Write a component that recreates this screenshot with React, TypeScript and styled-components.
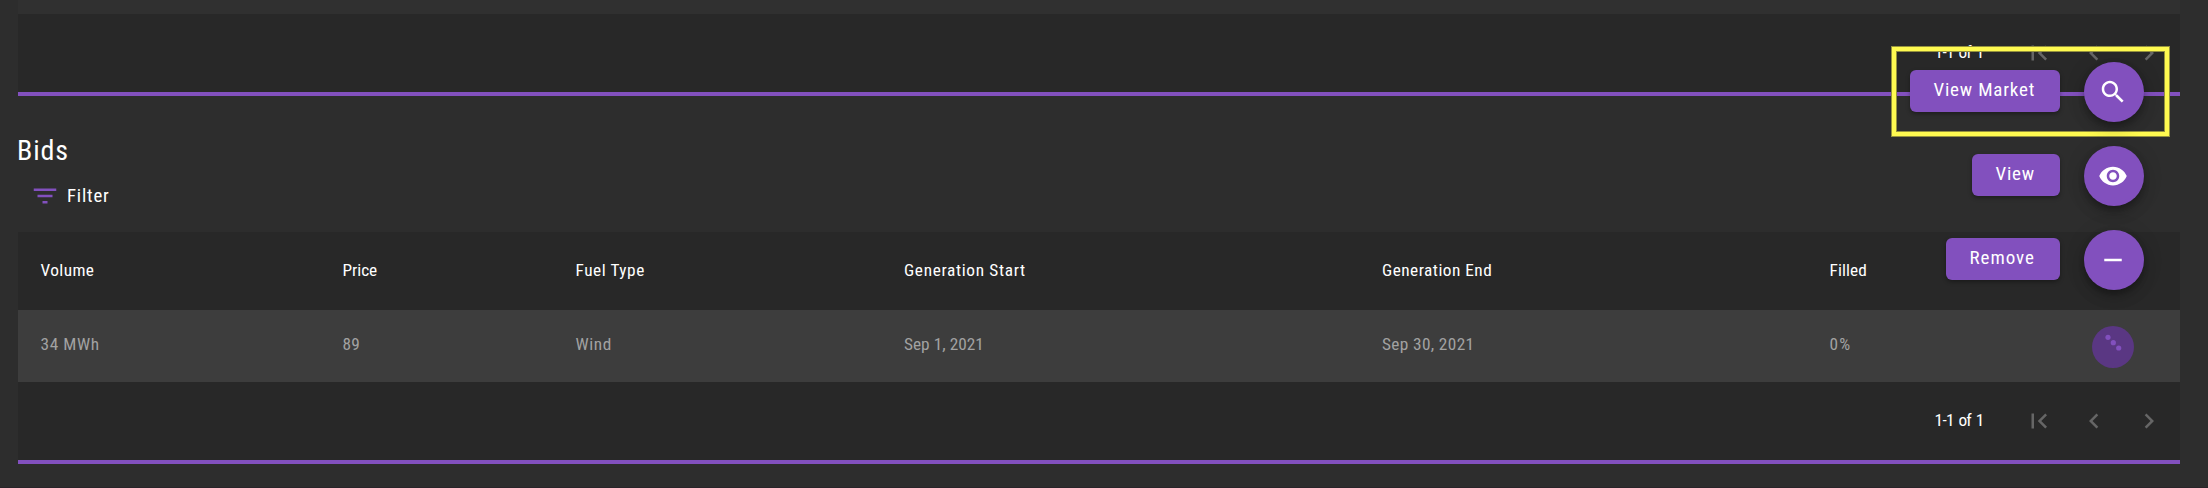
import React from 'react';
import styled, { createGlobalStyle } from 'styled-components';

const purple = '#8250be';

const GlobalStyle = createGlobalStyle`
  *, *::before, *::after { box-sizing: border-box; }
  body {
    margin: 0;
    background: #2d2d2d;
    color: #fff;
    font-family: Roboto, 'Liberation Sans', sans-serif;
    font-stretch: 75%;
  }
`;

const Page = styled.main`
  position: relative;
  height: 488px;
  padding: 0 28px 0 18px;
  overflow: hidden;
  border-bottom: 1px solid #292429;
`;

const RowEdge = styled.div`
  height: 14px;
  background: #303030;
`;

const TableFooter = styled.footer`
  display: flex;
  align-items: center;
  justify-content: flex-end;
  height: 82px;
  padding-right: 3px;
  background: #282828;
  border-bottom: 4px solid ${purple};
`;

const Label = styled.span<{ $track?: number }>`
  display: block;
  white-space: nowrap;
  letter-spacing: ${(p) => p.$track ?? 0}px;
`;

const PageRange = styled(Label)`
  flex: none;
  width: 76.5px;
  margin-top: -2px;
  font-size: 17.3px;
  line-height: 20px;
  word-spacing: 1.5px;
`;

const PagerButton = styled.button`
  display: flex;
  flex: none;
  justify-content: center;
  width: 55.3px;
  padding: 0;
  border: 0;
  background: none;
  color: #666;
`;

const Icon = styled.svg`
  display: block;
  width: 30px;
  height: 30px;
  fill: currentColor;
`;

const Title = styled.h2`
  margin: 0 0 0 -1px;
  padding-top: 38px;
  font-size: 28px;
  line-height: 34px;
  font-weight: 400;
`;

const FilterButton = styled.button`
  display: flex;
  align-items: center;
  gap: 7px;
  height: 64px;
  padding: 0 0 8px 12px;
  border: 0;
  background: none;
  color: #fff;
  font: inherit;
  font-stretch: 75%;
  font-size: 18.8px;
  line-height: 22px;

  svg { color: ${purple}; }
`;

const Row = styled.div<{ $head?: boolean }>`
  display: grid;
  grid-template-columns: 302px 233px 328.5px 478px 447.5px 1fr;
  align-items: center;
  height: ${(p) => (p.$head ? 78 : 72)}px;
  padding-left: 22.5px;
  padding-bottom: ${(p) => (p.$head ? 2 : 4)}px;
  background: ${(p) => (p.$head ? '#282828' : '#3d3d3d')};
  color: ${(p) => (p.$head ? '#fff' : '#a2a2a2')};
  font-size: 17.3px;
  line-height: 20px;
`;

const LastCell = styled.div`
  display: flex;
  align-items: center;
  justify-content: space-between;
  padding-right: 46px;
`;

const MoreButton = styled.button`
  width: 42px;
  height: 42px;
  margin-top: 6px;
  padding: 0;
  border: 0;
  border-radius: 50%;
  background: #5a3783;
  color: ${purple};

  svg { width: 42px; height: 42px; }
`;

const SpeedDial = styled.div`
  position: absolute;
  top: 62px;
  right: 64px;
  display: flex;
  flex-direction: column;
  gap: 24px;
`;

const Action = styled.div`
  display: flex;
  align-items: center;
  justify-content: flex-end;
  gap: 24px;
`;

const ActionLabel = styled.div<{ $width: number }>`
  width: ${(p) => p.$width}px;
  height: 42px;
  margin-bottom: 2px;
  padding: 8px 0 0 23.5px;
  border-radius: 6px;
  background: ${purple};
  box-shadow: 0 2px 4px rgba(0, 0, 0, 0.35);
  font-size: 19px;
  line-height: 23px;
`;

const Fab = styled.button`
  display: flex;
  align-items: center;
  justify-content: center;
  width: 60px;
  height: 60px;
  padding: 0 2px 0 0;
  border: 0;
  border-radius: 50%;
  background: ${purple};
  color: #fff;
  box-shadow: 0 4px 7px -1px rgba(0, 0, 0, 0.3), 0 8px 14px rgba(0, 0, 0, 0.13),
    0 1px 22px rgba(0, 0, 0, 0.1);
`;

const Highlight = styled.div`
  position: absolute;
  top: 46px;
  right: 38px;
  width: 279px;
  height: 91px;
  border: 1px solid #95923e;
  box-shadow: inset 0 0 0 4px #fffa50, inset 0 0 0 5px #95923e;
`;

const ICONS = {
  filter: 'M10 18h4v-2h-4v2zM3 6v2h18V6H3zm3 7h12v-2H6v2z',
  first: 'M18.41 16.59L13.82 12l4.59-4.59L17 6l-6 6 6 6zM6 6h2v12H6z',
  prev: 'M15.41 7.41L14 6l-6 6 6 6 1.41-1.41L10.83 12z',
  next: 'M10 6L8.59 7.41 13.17 12l-4.58 4.59L10 18l6-6z',
  search:
    'M15.5 14h-.79l-.28-.27C15.41 12.59 16 11.11 16 9.5 16 5.91 13.09 3 9.5 3S3 5.91 3 9.5 5.91 16 9.5 16c1.61 0 3.09-.59 4.23-1.57l.27.28v.79l5 4.99L20.49 19l-4.99-5zm-6 0C7.01 14 5 11.99 5 9.5S7.01 5 9.5 5 14 7.01 14 9.5 11.99 14 9.5 14z',
  eye: 'M12 4.5C7 4.5 2.73 7.61 1 12c1.73 4.39 6 7.5 11 7.5s9.27-3.11 11-7.5c-1.73-4.39-6-7.5-11-7.5zM12 17c-2.76 0-5-2.24-5-5s2.24-5 5-5 5 2.24 5 5-2.24 5-5 5zm0-8c-1.66 0-3 1.34-3 3s1.34 3 3 3 3-1.34 3-3-1.34-3-3-3z',
  minus: 'M19 13H5v-2h14v2z',
};

const Glyph = ({ name }: { name: keyof typeof ICONS }) => (
  <Icon viewBox="0 0 24 24" aria-hidden="true">
    <path d={ICONS[name]} />
  </Icon>
);

const Pagination = () => (
  <TableFooter>
    <PageRange $track={-0.75}>1-1 of 1</PageRange>
    <PagerButton aria-label="First page"><Glyph name="first" /></PagerButton>
    <PagerButton aria-label="Previous page"><Glyph name="prev" /></PagerButton>
    <PagerButton aria-label="Next page"><Glyph name="next" /></PagerButton>
  </TableFooter>
);

const headings: [string, number][] = [
  ['Volume', 0.4],
  ['Price', -0.05],
  ['Fuel Type', 0.55],
  ['Generation Start', 0.66],
  ['Generation End', 0.47],
  ['Filled', 0.08],
];

const bid: [string, number][] = [
  ['34 MWh', 0.6],
  ['89', 0.3],
  ['Wind', 0.55],
  ['Sep 1, 2021', 0.03],
  ['Sep 30, 2021', 0.36],
];

const actions: { text: string; width: number; track: number; icon: keyof typeof ICONS }[] = [
  { text: 'View Market', width: 150, track: 0.8, icon: 'search' },
  { text: 'View', width: 88, track: 0.75, icon: 'eye' },
  { text: 'Remove', width: 114, track: 0.95, icon: 'minus' },
];

export default function App() {
  return (
    <Page>
      <GlobalStyle />
      <RowEdge />
      <Pagination />
      <Title><Label $track={0.9}>Bids</Label></Title>
      <FilterButton>
        <Glyph name="filter" />
        <Label $track={0.8}>Filter</Label>
      </FilterButton>
      <Row $head>
        {headings.map(([text, track]) => (
          <Label key={text} $track={track}>{text}</Label>
        ))}
      </Row>
      <Row>
        {bid.map(([text, track]) => (
          <Label key={text} $track={track}>{text}</Label>
        ))}
        <LastCell>
          <Label $track={1.2}>0%</Label>
          <MoreButton aria-label="Bid actions">
            <Icon viewBox="0 0 42 42" aria-hidden="true">
              <circle cx="16" cy="11.3" r="2.6" />
              <circle cx="21.3" cy="16.7" r="2.6" />
              <circle cx="26.7" cy="22" r="2.6" />
            </Icon>
          </MoreButton>
        </LastCell>
      </Row>
      <Pagination />
      <Highlight />
      <SpeedDial>
        {actions.map((a) => (
          <Action key={a.text}>
            <ActionLabel $width={a.width}>
              <Label $track={a.track}>{a.text}</Label>
            </ActionLabel>
            <Fab aria-label={a.text}><Glyph name={a.icon} /></Fab>
          </Action>
        ))}
      </SpeedDial>
    </Page>
  );
}
